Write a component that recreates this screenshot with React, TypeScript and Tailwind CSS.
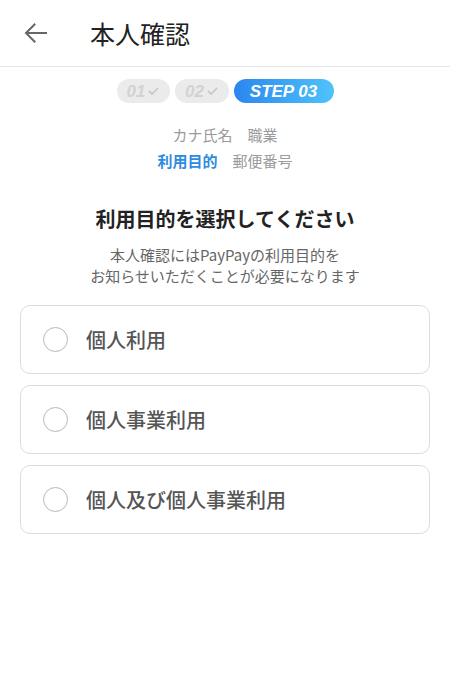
import React from "react";

const font = { fontFamily: '"Noto Sans CJK JP", "Noto Sans", sans-serif' };

function Check() {
  return (
    <svg width="11" height="9" viewBox="0 0 11 9" fill="none">
      <path d="M1.5 4.5 L4.2 7 L9.5 1.5" stroke="#c8c8c8" strokeWidth="1.8" strokeLinecap="round" strokeLinejoin="round" />
    </svg>
  );
}

function Option({ label }: { label: string }) {
  return (
    <div className="h-[69px] rounded-[10px] border border-[#dcdcdc] flex items-center pl-[22px] bg-white">
      <div className="w-[25px] h-[25px] rounded-full border-[1.5px] border-[#b8b8b8] shrink-0" />
      <span className="ml-[18px] text-[20px] font-medium text-[#555555] leading-none">{label}</span>
    </div>
  );
}

export default function App() {
  return (
    <div className="w-[450px] h-[678px] bg-white overflow-hidden" style={font}>
      <div className="h-[67px] flex items-center border-b border-[#e4e6ea]">
        <div className="w-[90px] flex items-center pl-[24px]">
          <svg width="23" height="20" viewBox="0 0 23 20" fill="none">
            <path d="M22 10 H2.5 M10.5 1.5 L2 10 L10.5 18.5" stroke="#666" strokeWidth="2" strokeLinecap="square" />
          </svg>
        </div>
        <span className="text-[25px] text-[#222] leading-none">本人確認</span>
      </div>

      <div className="flex justify-center gap-[5px] mt-[12px]">
        <div className="h-[24px] w-[53px] rounded-full bg-[#ebebeb] flex items-center justify-center gap-[3px]">
          <span className="text-[17px] font-bold italic text-[#d2d2d2] leading-none" style={{ fontFamily: '"Liberation Sans", sans-serif' }}>01</span>
          <Check />
        </div>
        <div className="h-[24px] w-[54px] rounded-full bg-[#ebebeb] flex items-center justify-center gap-[3px]">
          <span className="text-[17px] font-bold italic text-[#d2d2d2] leading-none" style={{ fontFamily: '"Liberation Sans", sans-serif' }}>02</span>
          <Check />
        </div>
        <div className="h-[24px] w-[100px] rounded-full bg-gradient-to-r from-[#2c86ee] to-[#4fc3fb] flex items-center justify-center">
          <span className="text-[17px] font-bold italic text-white leading-none" style={{ fontFamily: '"Liberation Sans", sans-serif' }}>STEP 03</span>
        </div>
      </div>

      <div className="flex flex-col items-center mt-[19px] text-[15px] leading-[26px]">
        <div className="text-[#9a9a9a]">カナ氏名　職業</div>
        <div>
          <span className="text-[#2e8be0] font-bold">利用目的</span>
          <span className="text-[#9a9a9a]">　郵便番号</span>
        </div>
      </div>

      <div className="mt-[35px] text-center text-[20px] font-bold text-[#222] leading-none">利用目的を選択してください</div>
      <div className="mt-[15px] text-center text-[15px] text-[#666] leading-[21px]">
        <div>本人確認にはPayPayの利用目的を</div>
        <div>お知らせいただくことが必要になります</div>
      </div>

      <div className="mx-[20px] mt-[19px] flex flex-col gap-[11px]">
        <Option label="個人利用" />
        <Option label="個人事業利用" />
        <Option label="個人及び個人事業利用" />
      </div>
    </div>
  );
}
